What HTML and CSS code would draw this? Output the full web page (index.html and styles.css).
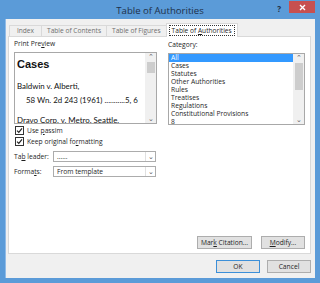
FILE: index.html
```html
<!DOCTYPE html>
<html lang="en">
<head>
  <meta charset="UTF-8">
  <title>Table of Authorities</title>
  <link rel="stylesheet" href="styles.css">
</head>
<body>
  <div class="window">
    <div class="titlebar">
      <div class="title">Table of Authorities</div>
      <div class="help">?</div>
      <div class="close">
        <svg width="7" height="7" viewBox="0 0 7 7"><path d="M1 1L6 6M6 1L1 6" stroke="#fff" stroke-width="1.4"/></svg>
      </div>
    </div>

    <div class="client">
      <div class="tabs">
        <div class="tab tab-index">Index</div>
        <div class="tab">Table of Contents</div>
        <div class="tab">Table of Figures</div>
        <div class="tab active"><span class="focus">Table of <u>A</u>uthorities</span></div>
      </div>

      <div class="panel">
        <div class="columns">
          <div class="col-left">
            <div class="label">Print Pre<u>v</u>iew</div>
            <div class="preview">
              <div class="preview-text">
                <div class="pv-head">Cases</div>
                <div class="pv-line">Baldwin v. Alberti,</div>
                <div class="pv-line indent">58 Wn. 2d 243 (1961) ...........5, 6</div>
                <div class="pv-line gap">Dravo Corp. v. Metro. Seattle,</div>
              </div>
              <div class="scrollbar">
                <div class="arrow">&#8963;</div>
                <div class="track"><div class="thumb thumb-small"></div></div>
                <div class="arrow">&#8964;</div>
              </div>
            </div>

            <div class="check-row">
              <span class="checkbox"><svg width="7" height="7" viewBox="0 0 7 7"><path d="M1 3.6L2.8 5.4L6 1.4" fill="none" stroke="#222" stroke-width="1.2"/></svg></span>
              <span>Use <u>p</u>assim</span>
            </div>
            <div class="check-row">
              <span class="checkbox"><svg width="7" height="7" viewBox="0 0 7 7"><path d="M1 3.6L2.8 5.4L6 1.4" fill="none" stroke="#222" stroke-width="1.2"/></svg></span>
              <span>Keep original fo<u>r</u>matting</span>
            </div>

            <div class="field">
              <span class="field-label">Ta<u>b</u> leader:</span>
              <div class="select"><span class="select-value">......</span><span class="select-arrow">&#8964;</span></div>
            </div>
            <div class="field">
              <span class="field-label">Forma<u>t</u>s:</span>
              <div class="select"><span class="select-value">From template</span><span class="select-arrow">&#8964;</span></div>
            </div>
          </div>

          <div class="col-right">
            <div class="label">Cate<u>g</u>ory:</div>
            <div class="listbox">
              <div class="list-items">
                <div class="list-item selected">All</div>
                <div class="list-item">Cases</div>
                <div class="list-item">Statutes</div>
                <div class="list-item">Other Authorities</div>
                <div class="list-item">Rules</div>
                <div class="list-item">Treatises</div>
                <div class="list-item">Regulations</div>
                <div class="list-item">Constitutional Provisions</div>
                <div class="list-item">8</div>
              </div>
              <div class="scrollbar">
                <div class="arrow">&#8963;</div>
                <div class="track"><div class="thumb thumb-big"></div></div>
                <div class="arrow">&#8964;</div>
              </div>
            </div>
          </div>
        </div>

        <div class="panel-buttons">
          <div class="button wide">Mar<u>k</u> Citation...</div>
          <div class="button"><u>M</u>odify...</div>
        </div>
      </div>

      <div class="dialog-buttons">
        <div class="button default">OK</div>
        <div class="button">Cancel</div>
      </div>
    </div>
  </div>
</body>
</html>
```

FILE: styles.css
```css
body {
  margin: 0;
  font-family: "Open Sans", "Noto Sans", sans-serif;
  font-size: 6.7px;
  color: #1e1e1e;
}
u { text-decoration-thickness: 0.6px; text-underline-offset: 1px; }

.window {
  width: 320px;
  height: 283px;
  background: #5b9bd8;
  box-sizing: border-box;
  padding: 0 5px 5px 5px;
  display: flex;
  flex-direction: column;
}
.titlebar {
  height: 19px;
  position: relative;
  display: flex;
  align-items: center;
  justify-content: center;
}
.title {
  font-size: 9.6px;
  color: #20304a;
  padding-top: 2px;
}
.help {
  position: absolute;
  right: 34px;
  top: 3px;
  font-size: 8px;
  font-weight: bold;
  color: #1f2f45;
}
.close {
  position: absolute;
  right: 0;
  top: 1px;
  width: 26px;
  height: 12px;
  background: #c75050;
  display: flex;
  align-items: center;
  justify-content: center;
}

.client {
  flex: 1;
  background: #f0f0f0;
  border-left: 1px solid #8fbbe8;
  box-sizing: border-box;
  padding: 4px 4px 5px 2px;
  display: flex;
  flex-direction: column;
}

.tabs {
  display: flex;
  align-items: flex-end;
  height: 13px;
  padding-left: 1px;
  position: relative;
  z-index: 1;
}
.tab {
  height: 11px;
  box-sizing: border-box;
  border: 1px solid #d9d9d9;
  border-bottom: none;
  background: #f0f0f0;
  color: #6f6f6f;
  font-size: 6.6px;
  padding: 0 5px;
  line-height: 10px;
  margin-right: -1px;
  text-align: center;
}
.tab-index { width: 33px; }
.tab.active {
  height: 14px;
  margin-bottom: -1px;
  background: #fff;
  color: #1e1e1e;
  padding: 1px 2px 0;
  line-height: 11px;
}
.focus {
  display: block;
  border: 1px dotted #333;
  line-height: 9px;
  padding: 0 2px;
}

.panel {
  flex: 1;
  background: #fff;
  border: 1px solid #d9d9d9;
  padding: 3px 5px 4px 5px;
  display: flex;
  flex-direction: column;
}
.columns {
  display: flex;
  gap: 11px;
}
.col-left { width: 143px; }
.col-right { width: 137px; padding-top: 1px; }
.label {
  line-height: 8px;
  height: 9px;
  margin-bottom: 3px;
}

.preview {
  height: 72px;
  border: 1px solid #a8a8a8;
  box-sizing: border-box;
  display: flex;
  overflow: hidden;
}
.preview-text {
  flex: 1;
  font-family: Lato, "Open Sans", sans-serif;
  font-size: 7.9px;
  color: #111;
  padding: 4px 0 0 2px;
  overflow: hidden;
  white-space: nowrap;
}
.pv-head {
  font-family: "Liberation Sans", Arial, sans-serif;
  font-weight: bold;
  font-size: 11px;
  line-height: 14px;
  margin-bottom: 8px;
}
.pv-line { line-height: 14px; }
.pv-line.indent { padding-left: 9px; }
.pv-line.gap { margin-top: 6px; }

.scrollbar {
  width: 10px;
  background: #f0f0f0;
  border-left: 1px solid #f0f0f0;
  display: flex;
  flex-direction: column;
  align-items: center;
}
.arrow {
  height: 8px;
  line-height: 8px;
  font-size: 7px;
  color: #606060;
}
.track { flex: 1; width: 100%; }
.thumb {
  background: #cdcdcd;
  margin: 1px 1px 0;
}
.thumb-small { height: 11px; }
.thumb-big { height: 27px; }

.check-row {
  display: flex;
  align-items: center;
  height: 10px;
  margin-top: 1px;
  padding-left: 1px;
}
.check-row:first-of-type { margin-top: 2px; }
.checkbox {
  width: 7px;
  height: 7px;
  border: 1px solid #333;
  background: #fff;
  margin-right: 3px;
  display: flex;
}

.field {
  display: flex;
  align-items: center;
  height: 11px;
  margin-top: 5px;
}
.field + .field { margin-top: 4px; }
.field-label { width: 39px; }
.select {
  flex: 1;
  height: 11px;
  box-sizing: border-box;
  border: 1px solid #acacac;
  background: #fff;
  display: flex;
  align-items: center;
  margin-right: 1px;
}
.select-value { flex: 1; padding-left: 3px; line-height: 9px; }
.select-arrow {
  width: 9px;
  border-left: 1px solid #e0e0e0;
  text-align: center;
  font-size: 7px;
  line-height: 9px;
  color: #555;
}

.listbox {
  height: 72px;
  border: 1px solid #a8a8a8;
  box-sizing: border-box;
  display: flex;
  overflow: hidden;
}
.list-items { flex: 1; overflow: hidden; }
.list-item {
  height: 8px;
  line-height: 8px;
  padding-left: 2px;
  white-space: nowrap;
}
.list-item.selected {
  background: #3399ff;
  color: #fff;
}

.panel-buttons,
.dialog-buttons {
  display: flex;
  justify-content: flex-end;
}
.panel-buttons { margin-top: auto; gap: 9px; }
.dialog-buttons { margin-top: 6px; gap: 7px; }
.button {
  width: 44px;
  height: 13px;
  box-sizing: border-box;
  border: 1px solid #adadad;
  background: #e1e1e1;
  text-align: center;
  line-height: 11px;
}
.button.wide { width: 55px; }
.button.default { border-color: #3c8fd8; }
```
